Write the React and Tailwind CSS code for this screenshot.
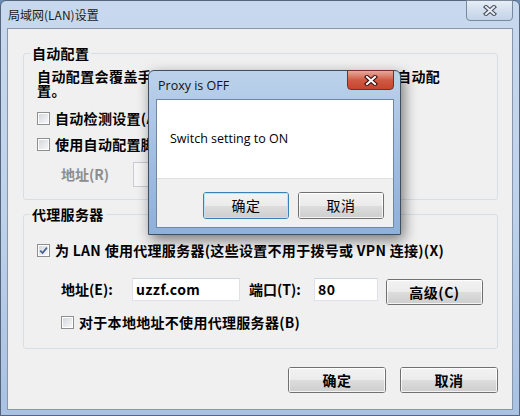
import React from 'react'

const cjk = "font-['Noto_Sans_CJK_SC',sans-serif]"

function CloseX({ light }) {
  return (
    <svg width="14" height="11" viewBox="0 0 14 11">
      <path d="M3 2 L11 9 M11 2 L3 9" stroke={light ? '#4a4f5a' : '#3b1010'} strokeWidth="4.2" strokeLinecap="square" />
      <path d="M3 2 L11 9 M11 2 L3 9" stroke={light ? '#e9eef5' : '#ffffff'} strokeWidth="2" strokeLinecap="square" />
    </svg>
  )
}

function Check({ checked, children, className = '' }) {
  return (
    <div className={`flex items-center h-[16px] ${className}`}>
      <span className="w-[13px] h-[13px] border border-[#8e8f8f] bg-white p-[1px] flex">
        <span className="flex-1 bg-gradient-to-br from-[#d4d8de] to-[#f7f7f7] flex items-center justify-center">
          {checked && (
            <svg width="9" height="9" viewBox="0 0 9 9">
              <path d="M1.2 4.6 L3.6 7 L7.9 1.6" fill="none" stroke="#4a5f8e" strokeWidth="1.7" />
            </svg>
          )}
        </span>
      </span>
      <span className="ml-[5px] text-[14px] leading-[16px] font-bold tracking-[0.3px] whitespace-nowrap">{children}</span>
    </div>
  )
}

function Btn({ children, def, className = '' }) {
  return (
    <div
      className={`h-[26px] rounded-[3px] border ${def ? 'border-[#3c7fb1]' : 'border-[#707070]'} flex flex-col overflow-hidden relative ${className}`}
    >
      <div className={`flex-1 bg-gradient-to-b from-[#f2f2f2] to-[#ebebeb] ${def ? 'border-x border-t border-[#b6e5f8]' : 'border-x border-t border-white'}`} />
      <div className={`flex-1 bg-gradient-to-b from-[#dddddd] to-[#cfcfcf] ${def ? 'border-x border-b border-[#b6e5f8]' : 'border-x border-b border-[#f4f4f4]'}`} />
      <span className="absolute inset-0 flex items-center justify-center text-[14px] font-bold tracking-[0.5px]">{children}</span>
    </div>
  )
}

function Input({ children, className = '' }) {
  return (
    <div className={`h-[23px] bg-white border border-[#dfe3e9] border-t-[#cfd5dd] flex items-center pl-[3px] text-[14px] font-bold tracking-[0.4px] ${className}`}>
      {children}
    </div>
  )
}

export default function App() {
  return (
    <div className={`w-[520px] h-[416px] relative overflow-hidden bg-[#6b8bb5] ${cjk} text-black`}>
      {/* main window */}
      <div className="w-full h-full flex flex-col rounded-t-[6px] border border-[#55657c] bg-gradient-to-b from-[#c8d9ee] via-[#bed2ea] to-[#a9c2e2]">
        <div className="h-[27px] flex items-start justify-between pl-[7px] pr-[6px]">
          <span className="mt-[6px] text-[12px] leading-[16px] text-[#1b1b1b]">局域网(LAN)设置</span>
          <div className="-mt-px w-[47px] h-[21px] rounded-b-[4px] border border-[#7b889b] bg-gradient-to-b from-[#e6eef7] via-[#d3dfee] to-[#c3d3e8] flex items-center justify-center">
            <CloseX light />
          </div>
        </div>

        <div className="flex-1 mx-[6px] mb-[5px] border border-[#8796aa] bg-[#f0f0f0] flex flex-col pt-[16px] pl-[15px] pr-[14px]">
          {/* 自动配置 */}
          <fieldset className="h-[155px] border border-[#d5dfe5] rounded-[3px]">
            <legend className="ml-[6px] px-[2px] text-[14px] leading-[16px] font-bold tracking-[0.3px]">自动配置</legend>
            <div className="pl-[13px]">
              <p className="mt-[8px] text-[14px] leading-[14px] font-bold tracking-[0.4px] w-[430px]">
                自动配置会覆盖手动设置。要确保使用手动设置，请禁用自动配置。
              </p>
              <Check className="mt-[13px]">自动检测设置(A)</Check>
              <Check className="mt-[10px]">使用自动配置脚本(S)</Check>
              <div className="mt-[10px] flex items-center pl-[24px]">
                <span className="w-[72px] text-[14px] font-bold text-[#8d8d8d]">地址(R)</span>
                <div className="h-[25px] w-[240px] bg-[#f6f6f6] border border-[#c8ccd2]" />
              </div>
            </div>
          </fieldset>

          {/* 代理服务器 */}
          <fieldset className="mt-[6px] h-[143px] border border-[#d5dfe5] rounded-[3px]">
            <legend className="ml-[6px] px-[2px] text-[14px] leading-[16px] font-bold tracking-[0.3px]">代理服务器</legend>
            <div className="pl-[13px]">
              <Check checked className="mt-[20px]">为 LAN 使用代理服务器(这些设置不用于拨号或 VPN 连接)(X)</Check>
              <div className="mt-[20px] flex items-start pl-[24px] h-[27px]">
                <span className="w-[71px] h-[23px] flex items-center text-[14px] font-bold">地址(E):</span>
                <Input className="w-[108px]">uzzf.com</Input>
                <span className="ml-[9px] w-[65px] h-[23px] flex items-center text-[14px] font-bold">端口(T):</span>
                <Input className="w-[64px]">80</Input>
                <Btn className="ml-[8px] mt-px w-[97px]">高级(C)</Btn>
              </div>
              <Check className="mt-[9px] pl-[24px]">对于本地地址不使用代理服务器(B)</Check>
            </div>
          </fieldset>

          <div className="mt-[18px] flex justify-end gap-[14px]">
            <Btn className="w-[98px]">确定</Btn>
            <Btn className="w-[98px]">取消</Btn>
          </div>
        </div>
      </div>

      {/* message box */}
      <div className="absolute left-[148px] top-[70px] w-[253px] h-[165px] flex flex-col rounded-t-[6px] border border-[#3e4e64] bg-gradient-to-b from-[#bcd2eb] via-[#a3bfe1] to-[#8fb0d9] shadow-[3px_5px_14px_rgba(0,0,0,0.5)] pl-[7px] pr-[6px] pb-[6px]">
        <div className="h-[28px] flex items-start justify-between">
          <span className="mt-[7px] ml-[2px] font-['Open_Sans',sans-serif] text-[12.5px] leading-[16px] text-[#111]">Proxy is OFF</span>
          <div className="-mt-px w-[47px] h-[20px] rounded-b-[4px] border border-[#7a2d24] bg-gradient-to-b from-[#e6a99e] via-[#cf5a44] to-[#c5452d] flex items-center justify-center">
            <CloseX />
          </div>
        </div>
        <div className="flex-1 border border-[#6f87a6] flex flex-col bg-[#f0f0f0]">
          <div className="h-[78px] bg-white pl-[13px] pt-[31px] font-['Open_Sans',sans-serif] text-[12.5px] leading-[16px]">
            Switch setting to ON
          </div>
          <div className="flex-1 border-t border-[#dfdfdf] flex justify-end items-start pt-[13px] pr-[9px] gap-[9px]">
            <Btn def className="w-[86px] h-[27px] [&>span]:font-normal">确定</Btn>
            <Btn className="w-[86px] h-[27px] [&>span]:font-normal">取消</Btn>
          </div>
        </div>
      </div>
    </div>
  )
}
